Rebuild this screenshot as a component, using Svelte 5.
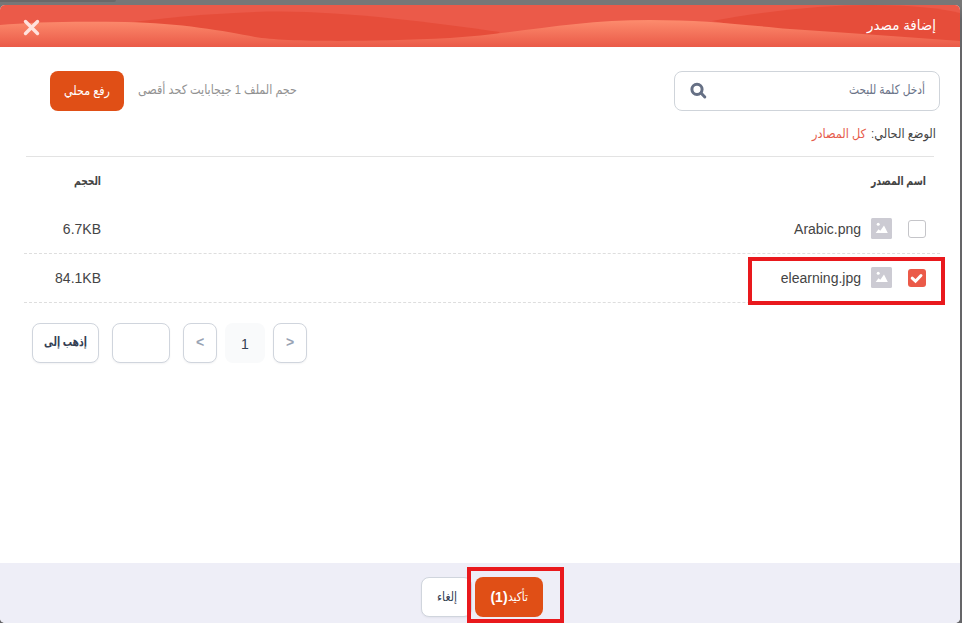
<script>
  const files = [
    { name: 'Arabic.png', size: '6.7KB', checked: false },
    { name: 'elearning.jpg', size: '84.1KB', checked: true }
  ];
</script>

{#snippet label(text, width, size, baseline, weight = 400)}
  <svg class="label" {width} height="24" role="img" aria-label={text}>
    <text x={width / 2} y={baseline} text-anchor="middle" font-size={size} font-weight={weight} textLength={width} lengthAdjust="spacingAndGlyphs">{text}</text>
  </svg>
{/snippet}

<div class="page">
  <div class="tab"></div>
  <section class="dialog" dir="rtl">
    <header>
      <svg class="waves" viewBox="0 0 960 42" preserveAspectRatio="none">
        <defs>
          <linearGradient id="glow" x1="0" y1="16" x2="0" y2="42" gradientUnits="userSpaceOnUse">
            <stop offset="0" stop-color="#fc8a6c" />
            <stop offset="1" stop-color="#ea5a48" />
          </linearGradient>
        </defs>
        <path fill="#e64d3a" d="M115 19C170 12 230 6.5 280 6.5C350 7 430 17 500 27L480 42H240Z" />
        <path fill="#e64d3a" d="M712 16C765 6 825 0 870 0C910 0 940 3 960 8V42L850 40Z" />
        <path fill="url(#glow)" d="M0 20C30 17 75 16 125 17C180 18 225 26 255 32C285 37 365 37 450 33C520 28 575 15 650 15C700 15 735 19 790 24C850 28 905 32 960 36V42H0Z" />
      </svg>
      <div class="title">{@render label('إضافة مصدر', 69, 14, 16)}</div>
      <svg class="close" width="17" height="17" viewBox="0 0 17 17"><path d="M2.5 2.5L14.5 14.5M14.5 2.5L2.5 14.5" /></svg>
    </header>

    <main>
      <div class="toolbar">
        <div class="search">
          {@render label('أدخل كلمة للبحث', 76, 13, 15)}
          <svg width="18" height="18" viewBox="0 0 18 18"><circle cx="7" cy="7.3" r="5.1" /><path d="M11 11L14.8 15" /></svg>
        </div>
        <div class="upload-area">
          <span class="hint">{@render label('حجم الملف 1 جيجابايت كحد أقصى', 159, 13, 15)}</span>
          <button class="primary upload">{@render label('رفع محلي', 46, 13, 16)}</button>
        </div>
      </div>

      <div class="crumb">
        {@render label('الوضع الحالي:', 65, 12.5, 16)}
        <span class="red">{@render label('كل المصادر', 54, 12.5, 16)}</span>
      </div>

      <div class="table">
        <div class="row head">
          {@render label('اسم المصدر', 55, 12, 16, 700)}
          <div class="size">{@render label('الحجم', 27, 12, 16, 700)}</div>
        </div>
        {#each files as file}
          <div class="row">
            <div class="file">
              <span class="check" class:checked={file.checked}>
                {#if file.checked}
                  <svg width="18" height="18" viewBox="0 0 18 18"><path d="M4.2 9.2L7.5 12.2L13 6.5" /></svg>
                {/if}
              </span>
              <svg class="picture" width="21" height="21" viewBox="0 0 21 21">
                <rect width="21" height="21" rx="1.5" fill="#cccbd3" />
                <circle cx="7.2" cy="6.3" r="1.5" fill="#fff" />
                <path d="M4.7 15L7.5 11.2L9.3 12.8L13 7.4L16.8 15Z" fill="#fff" />
              </svg>
              <span dir="ltr">{file.name}</span>
            </div>
            <span class="size" dir="ltr">{file.size}</span>
          </div>
        {/each}
      </div>

      <nav dir="ltr">
        <button class="box go">{@render label('إذهب إلى', 43, 12.5, 15, 700)}</button>
        <div class="box entry"></div>
        <button class="box arrow">&lt;</button>
        <span class="current">1</span>
        <button class="box arrow">&gt;</button>
      </nav>
    </main>

    <footer dir="ltr">
      <button class="box cancel">{@render label('إلغاء', 20, 12.5, 16)}</button>
      <button class="primary confirm"><b>(1)</b>{@render label('تأكيد', 20, 12.5, 16)}</button>
    </footer>
    <div class="mark file-mark"></div>
    <div class="mark confirm-mark"></div>
  </section>
</div>

<style>
  :global(body) { margin: 0; overflow: hidden; }
  .page { position: relative; width: 962px; height: 623px; box-sizing: border-box; padding-top: 5px; background: linear-gradient(#777 0, #777 5px, #656568 20px); overflow: hidden; font: 14px "Liberation Sans", "DejaVu Sans", sans-serif; color: #444; }
  .tab { position: absolute; top: 0; left: 0; width: 116px; height: 2px; border-radius: 0 0 4px; background: #696969; }
  .dialog { position: relative; display: flex; flex-direction: column; width: 960px; height: 618px; background: #fff; border-radius: 5px; overflow: hidden; }
  .label { display: block; flex: none; overflow: visible; fill: currentColor; direction: rtl; font-family: "Liberation Sans", "DejaVu Sans", sans-serif; }
  header { position: relative; height: 42px; display: flex; flex: none; align-items: center; justify-content: space-between; padding: 0 24px 0 23px; box-sizing: border-box; background: #eb5a49; }
  .waves { position: absolute; inset: 0; width: 960px; height: 42px; }
  .title { position: relative; color: #fff; }
  .close { position: relative; top: 1px; fill: none; stroke: #ffe2dd; stroke-width: 3.4; stroke-linecap: round; }
  main { flex: 1; padding: 24px 20px 0 24px; }
  .toolbar { display: flex; justify-content: space-between; height: 40px; }
  .search { box-sizing: border-box; width: 266px; height: 40px; border: 1px solid #cfd4da; border-radius: 8px; padding: 0 14px 0 15px; display: flex; align-items: center; justify-content: space-between; color: #6b7388; }
  .search > svg:last-child { fill: none; stroke: #667085; stroke-width: 3; stroke-linecap: round; }
  .upload-area { display: flex; align-items: center; gap: 14px; padding-left: 26px; }
  .hint { color: #929292; }
  button { margin: 0; padding: 0; font: inherit; }
  .primary { display: flex; align-items: center; justify-content: center; height: 40px; border: 0; border-radius: 8px; background: #e04f16; color: #fff; }
  .upload { width: 74px; }
  .crumb { display: flex; height: 46px; box-sizing: border-box; gap: 5px; padding-top: 11px; margin: 0 6px 0 2px; border-bottom: 1px solid #e3e3e3; }
  .crumb > :global(svg:first-child) { margin-right: -2px; }
  .red { color: #e65b4b; }
  .row { height: 49px; box-sizing: border-box; display: flex; align-items: center; justify-content: space-between; padding-right: 14px; border-bottom: 1px dashed #dedede; }
  .row.head { height: 48px; border: 0; }
  .size { display: flex; justify-content: flex-start; width: 77px; }
  span.size { justify-content: flex-end; }
  .file { display: flex; align-items: center; gap: 10px; }
  .check { width: 18px; height: 18px; box-sizing: border-box; border: 1px solid #c5c5c9; border-radius: 3px; margin-left: 6px; }
  .checked { border: 0; background: #eb5a49; }
  .checked svg { display: block; fill: none; stroke: #fff; stroke-width: 3; stroke-linecap: round; }
  .picture { margin-bottom: 2px; }
  nav { display: flex; margin: 20px 0 0 8px; }
  .box { box-sizing: border-box; height: 40px; display: flex; align-items: center; justify-content: center; background: #fff; border: 1px solid #d0d5dd; border-radius: 8px; box-shadow: 0 1px 2px #1018280d; color: #344054; }
  .go { width: 67px; margin-right: 13px; }
  .entry { width: 58px; margin-right: 13px; }
  .arrow { width: 34px; color: #98a2b3; font-weight: 700; padding-bottom: 3px; }
  .current { width: 40px; height: 40px; margin: 0 8px; border-radius: 8px; background: #f9fafb; color: #344054; line-height: 42px; text-align: center; }
  footer { height: 60px; flex: none; box-sizing: border-box; display: flex; padding: 14px 0 0 421px; gap: 3px; background: #eeeef7; }
  .cancel { width: 51px; }
  .confirm { width: 68px; }
  .mark { position: absolute; box-sizing: border-box; border: 4px solid #e9191d; }
  .file-mark { left: 748px; top: 252px; width: 197px; height: 48px; }
  .confirm-mark { left: 467px; top: 562px; width: 97px; height: 56px; }
</style>
